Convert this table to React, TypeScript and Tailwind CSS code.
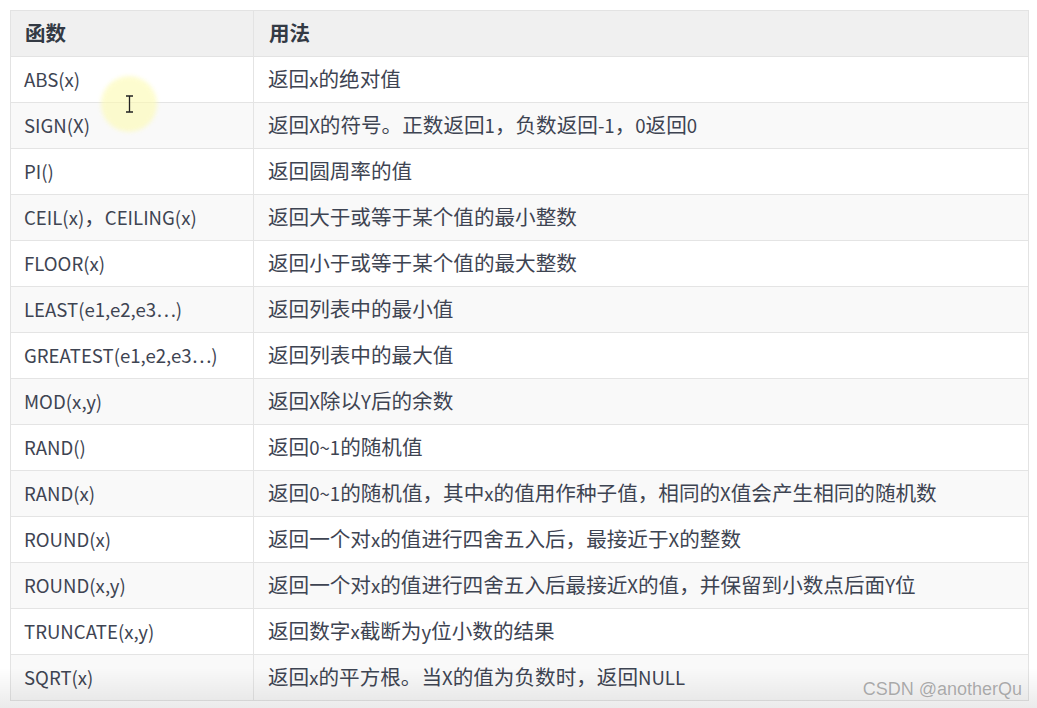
import React from "react";

const rows: [string, string][] = [
  ["ABS(x)", "返回x的绝对值"],
  ["SIGN(X)", "返回X的符号。正数返回1，负数返回-1，0返回0"],
  ["PI()", "返回圆周率的值"],
  ["CEIL(x)，CEILING(x)", "返回大于或等于某个值的最小整数"],
  ["FLOOR(x)", "返回小于或等于某个值的最大整数"],
  ["LEAST(e1,e2,e3…)", "返回列表中的最小值"],
  ["GREATEST(e1,e2,e3…)", "返回列表中的最大值"],
  ["MOD(x,y)", "返回X除以Y后的余数"],
  ["RAND()", "返回0~1的随机值"],
  ["RAND(x)", "返回0~1的随机值，其中x的值用作种子值，相同的X值会产生相同的随机数"],
  ["ROUND(x)", "返回一个对x的值进行四舍五入后，最接近于X的整数"],
  ["ROUND(x,y)", "返回一个对x的值进行四舍五入后最接近X的值，并保留到小数点后面Y位"],
  ["TRUNCATE(x,y)", "返回数字x截断为y位小数的结果"],
  ["SQRT(x)", "返回x的平方根。当X的值为负数时，返回NULL"],
];

function Mixed({ text }: { text: string }) {
  const parts = text.split(/([\x20-\x7E…]+)/).filter((p) => p.length > 0);
  return (
    <>
      {parts.map((p, i) =>
        /^[\x20-\x7E…]+$/.test(p) ? (
          <span key={i} className="text-[18.6px]">
            {p}
          </span>
        ) : (
          <span key={i}>{p}</span>
        )
      )}
    </>
  );
}

export default function App() {
  return (
    <div
      className="relative w-[1037px] h-[708px] overflow-hidden bg-white"
      style={{ fontFamily: '"Noto Sans CJK SC", "Noto Sans", sans-serif' }}
    >
      <div className="pt-[10px] pl-[10px] w-[1029px]">
        <div className="border border-[#e3e3e3] border-b-0">
          <div className="grid grid-cols-[243px_1fr] h-[46px] bg-[#f0f0f0] border-b border-[#e3e3e3] text-[20.5px] font-bold text-[#333a44]">
            <div className="flex items-center pl-[14px] pb-[2px] border-r border-[#e3e3e3]">函数</div>
            <div className="flex items-center pl-[15px] pb-[2px]">用法</div>
          </div>
          {rows.map(([f, d], i) => (
            <div
              key={i}
              className={`grid grid-cols-[243px_1fr] h-[46px] border-b border-[#e4e4e4] text-[20.6px] text-[#3e4452] ${
                i % 2 === 1 ? "bg-[#f9f9f9]" : "bg-white"
              }`}
            >
              <div className="flex items-center pl-[13px] pb-[2px] border-r border-[#e4e4e4] whitespace-nowrap">
                <Mixed text={f} />
              </div>
              <div className="flex items-center pl-[14px] pb-[2px] whitespace-nowrap">
                <Mixed text={d} />
              </div>
            </div>
          ))}
        </div>
      </div>
      <div className="absolute left-0 right-0 bottom-0 h-[40px] bg-gradient-to-b from-transparent to-black/[0.08] pointer-events-none" />
      <div
        className="absolute right-[15px] top-[676px] text-[18px] text-[#a9a9a9]"
        style={{ fontFamily: '"Liberation Sans", Arial, sans-serif', textShadow: "0 0 1px #fff" }}
      >
        CSDN @anotherQu
      </div>
      <div className="absolute left-[101px] top-[76px] w-[56px] h-[56px] rounded-full bg-[#fdfbb0] opacity-60 blur-[2px]" />
      <svg className="absolute left-[125px] top-[95px]" width="9" height="18" viewBox="0 0 9 18">
        <path d="M1 1h7M1 17h7M4.5 1v16" stroke="#222" strokeWidth="1.3" fill="none" />
      </svg>
    </div>
  );
}
